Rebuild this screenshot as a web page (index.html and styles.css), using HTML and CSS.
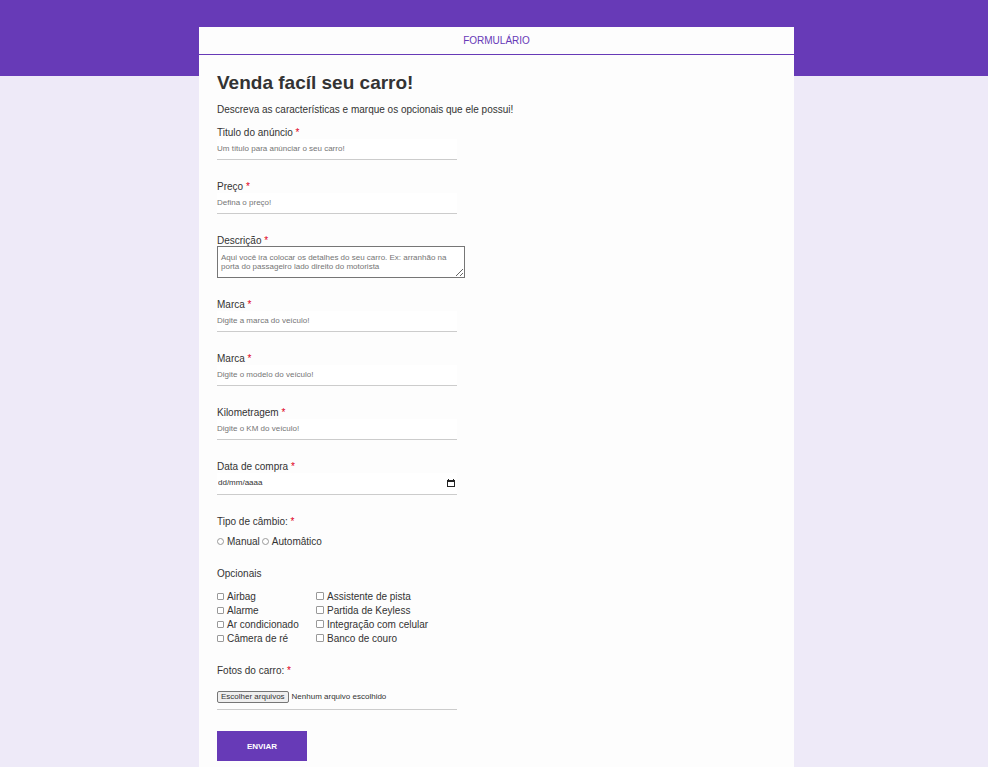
FILE: index.html
```html
<!DOCTYPE html>
<html lang="pt-BR">
<head>
  <meta charset="utf-8">
  <meta name="viewport" content="width=device-width, initial-scale=1">
  <title>Formulário</title>
  <link rel="stylesheet" href="styles.css">
</head>
<body>
  <main class="card">
    <header class="card-header">FORMULÁRIO</header>
    <form class="form">
      <h1 class="title">Venda facíl seu carro!</h1>
      <p class="intro">Descreva as características e marque os opcionais que ele possui!</p>

      <div class="field">
        <label for="titulo">Titulo do anúncio <span class="required">*</span></label>
        <input class="text-input" id="titulo" type="text" placeholder="Um título para anúnciar o seu carro!">
      </div>
      <div class="field">
        <label for="preco">Preço <span class="required">*</span></label>
        <input class="text-input" id="preco" type="text" placeholder="Defina o preço!">
      </div>
      <div class="field">
        <label for="descricao">Descrição <span class="required">*</span></label>
        <textarea class="text-area" id="descricao" rows="2" placeholder="Aqui você ira colocar os detalhes do seu carro. Ex: arranhão na porta do passageiro lado direito do motorista"></textarea>
      </div>
      <div class="field">
        <label for="marca">Marca <span class="required">*</span></label>
        <input class="text-input" id="marca" type="text" placeholder="Digite a marca do veículo!">
      </div>
      <div class="field">
        <label for="modelo">Marca <span class="required">*</span></label>
        <input class="text-input" id="modelo" type="text" placeholder="Digite o modelo do veículo!">
      </div>
      <div class="field">
        <label for="km">Kilometragem <span class="required">*</span></label>
        <input class="text-input" id="km" type="text" placeholder="Digite o KM do veículo!">
      </div>
      <div class="field">
        <label for="data">Data de compra <span class="required">*</span></label>
        <div class="date-box">
          <input class="date-input" id="data" type="text" inputmode="numeric" placeholder="dd/mm/aaaa">
          <button class="date-button" type="button" aria-label="Abrir calendário">
            <svg width="8" height="8" viewBox="0 0 8 8" shape-rendering="crispEdges" aria-hidden="true">
              <path d="M1 0h1v1h4V0h1v1h1v7H0V1h1zM1 3v4h6V3z" fill="#222" fill-rule="evenodd"/>
            </svg>
          </button>
        </div>
      </div>

      <fieldset class="group gearbox">
        <legend>Tipo de câmbio: <span class="required">*</span></legend>
        <div class="radios">
          <label class="option"><input type="radio" name="cambio">Manual</label>
          <label class="option"><input type="radio" name="cambio">Automâtico</label>
        </div>
      </fieldset>

      <fieldset class="group extras">
        <legend>Opcionais</legend>
        <div class="columns">
          <div class="column">
            <label class="option"><input type="checkbox">Airbag</label>
            <label class="option"><input type="checkbox">Alarme</label>
            <label class="option"><input type="checkbox">Ar condicionado</label>
            <label class="option"><input type="checkbox">Câmera de ré</label>
          </div>
          <div class="column large">
            <label class="option"><input type="checkbox">Assistente de pista</label>
            <label class="option"><input type="checkbox">Partida de Keyless</label>
            <label class="option"><input type="checkbox">Integração com celular</label>
            <label class="option"><input type="checkbox">Banco de couro</label>
          </div>
        </div>
      </fieldset>

      <div class="photos">
        <label for="fotos">Fotos do carro: <span class="required">*</span></label>
        <div class="file-box">
          <input class="file-input" id="fotos" type="file" multiple>
          <label class="file-button" for="fotos">Escolher arquivos</label>
          <span class="file-status">Nenhum arquivo escolhido</span>
        </div>
      </div>

      <button class="submit" type="submit">ENVIAR</button>
    </form>
  </main>
</body>
</html>
```

FILE: styles.css
```css
* {
  box-sizing: border-box;
}

html {
  overflow-x: hidden;
}

body {
  margin: 0;
  min-height: 100vh;
  padding: 27px 0 0 5px;
  background: linear-gradient(#673ab7, #673ab7) 0 0 / 100% 76px no-repeat #eeeaf8;
  color: #333;
  font: 10px/12px Arial, "Liberation Sans", sans-serif;
}

input,
textarea,
button {
  font-family: inherit;
  color: inherit;
}

.card {
  max-width: 595px;
  margin: 0 auto;
  background: #fdfdfd;
}

.card-header {
  padding: 8px;
  border-bottom: 1px solid #673ab7;
  color: #673ab7;
  line-height: 11px;
  text-align: center;
}

.form {
  padding: 17px 18px 6px;
}

.title {
  margin: 0 0 10px;
  font-size: 19px;
  line-height: 22px;
}

.intro {
  margin: 0 0 11px;
}

.required {
  color: #e00020;
}

.field {
  display: flex;
  flex-direction: column;
  align-items: flex-start;
  max-width: 248px;
  margin-bottom: 21px;
}

.text-input,
.date-box {
  width: 240px;
  max-width: 100%;
  height: 21px;
  border: 0;
  border-bottom: 1px solid #ccc;
  background: #fff;
  font-size: 8px;
}

.text-input {
  padding: 0 0 2px;
}

.text-input::placeholder,
.text-area::placeholder {
  color: #757575;
}

.text-area {
  width: 100%;
  height: 32px;
  margin-top: -1px;
  padding: 6px 3px;
  border: 1px solid #767676;
  background: #fff;
  font-size: 8px;
  line-height: 9px;
  overflow: hidden;
  resize: both;
}

.date-box {
  display: flex;
  align-items: center;
  height: 22px;
  padding: 0 2px 2px 1px;
}

.date-input {
  flex: 1;
  min-width: 0;
  padding: 0;
  border: 0;
  background: transparent;
  font-size: 8px;
}

.date-input::placeholder {
  color: #333;
}

.date-button {
  display: flex;
  padding: 0;
  border: 0;
  background: none;
}

.group {
  margin: 0;
  padding: 0;
  border: 0;
}

.group legend {
  padding: 0;
}

.gearbox {
  margin-bottom: 20px;
}

.radios {
  display: flex;
  gap: 2px;
  padding-top: 8px;
}

.option {
  display: flex;
  align-items: center;
  gap: 3px;
}

.option input {
  appearance: none;
  width: 7px;
  height: 7px;
  margin: 0 0 2px;
  border: 1px solid #999;
  border-radius: 1px;
  background: #fff;
}

.option input[type="radio"] {
  border-radius: 50%;
}

.option input:checked {
  background: #673ab7;
}

.columns {
  display: grid;
  grid-template-columns: 99px 1fr;
  padding-top: 10px;
}

.column .option {
  height: 14px;
}

.large .option input {
  width: 8px;
  height: 8px;
}

.photos {
  padding-top: 19px;
  margin-bottom: 21px;
}

.file-box {
  display: flex;
  align-items: flex-start;
  gap: 3px;
  position: relative;
  width: 240px;
  max-width: 100%;
  height: 19px;
  margin-top: 14px;
  border-bottom: 1px solid #ccc;
  font-size: 8px;
}

.file-input {
  position: absolute;
  width: 1px;
  height: 1px;
  opacity: 0;
}

.file-button {
  padding: 0 3px;
  border: 1px solid #767676;
  border-radius: 2px;
  background: #efefef;
  line-height: 10px;
}

.submit {
  display: block;
  width: 90px;
  height: 30px;
  padding: 0;
  border: 0;
  background: #673ab7;
  color: #fff;
  font-size: 8px;
  font-weight: bold;
}
```
